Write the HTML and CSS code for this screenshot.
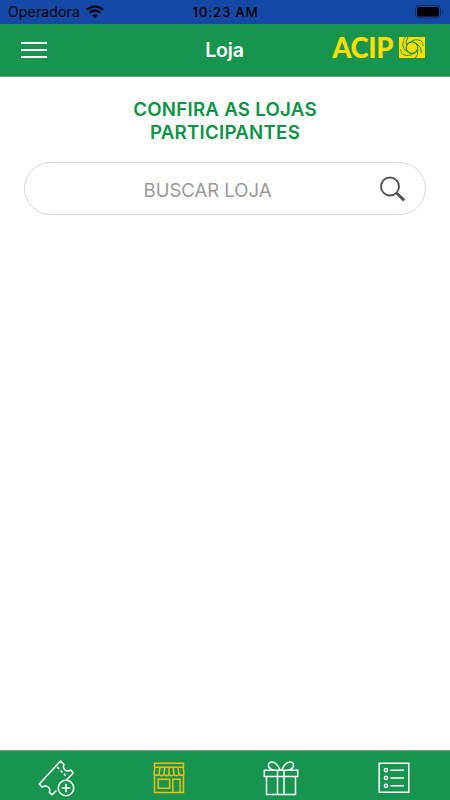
FILE: index.html
```html
<!DOCTYPE html>
<html lang="pt-BR">
<head>
    <meta charset="UTF-8">
    <meta name="viewport" content="width=device-width, initial-scale=1">
    <title>Loja</title>
    <link rel="stylesheet" href="styles.css">
</head>

<body>
    <div class="status">
        <div class="carrier">
            <span class="carrier-name">Operadora</span>
            <svg class="wifi" width="18" height="13" viewBox="0 0 18 13" fill="none" stroke="#000" stroke-width="2.3">
                <path d="M1 4.7Q9-2 17 4.7" />
                <path d="M3.8 7.7Q9 3.4 14.2 7.7" />
                <path d="M9 13L6.2 10.2Q9 8.2 11.8 10.2Z" fill="#000" stroke="none" />
            </svg>
        </div>
        <span class="time">10:23 AM</span>
        <svg class="battery" width="28" height="14" viewBox="0 0 28 14">
            <rect x=".5" y=".5" width="25" height="12.5" rx="3.5" fill="none" stroke="#0b2f6b" />
            <rect x="2" y="2" width="22" height="9.5" rx="2" />
            <path d="M27 4.5Q29 6.8 27 9Z" fill="#0b2f6b" />
        </svg>
    </div>

    <header class="header">
        <button class="menu" aria-label="Menu">
            <span></span>
            <span></span>
            <span></span>
        </button>
        <h1 class="title">Loja</h1>
        <div class="logo">
            <span class="logo-name">ACIP</span>
            <svg class="logo-mark" width="26" height="22" viewBox="0 0 26 22">
                <rect width="26" height="21" fill="#fedd00" />
                <g fill="none" stroke="#17954f">
                    <circle cx="13" cy="10.7" r="5.8" stroke-width="1.3" />
                    <path d="M7.6 9Q6 4 9 0M11.5 5Q16 1 22.5 4M17.8 7.2Q23 10 22 16M18.6 12.3Q19.5 18 16 21M14.5 16.3Q10 20 3.8 17.5M8.4 14.5Q3 12 4 5.5" />
                    <path d="M4 5.5Q4.5 2.5 6.5 0M22.5 4Q24 6 24.3 9M3.8 17.5Q1.5 15 1.5 12" stroke-width=".8" />
                </g>
            </svg>
        </div>
    </header>

    <main class="content">
        <h2 class="heading">CONFIRA AS LOJAS<br>PARTICIPANTES</h2>
        <form class="search">
            <input class="search-input" type="text" placeholder="BUSCAR LOJA">
            <svg class="search-icon" width="27" height="27" viewBox="0 0 27 27" fill="none" stroke="#555">
                <circle cx="11" cy="10.5" r="9" stroke-width="1.9" />
                <path d="M17.5 17L25.2 24.4" stroke-width="3" />
            </svg>
        </form>
    </main>

    <nav class="tabs">
        <a class="tab">
            <svg width="38" height="38" viewBox="0 0 38 38" fill="none" stroke="#fff" stroke-width="1.5" stroke-linejoin="round">
                <path d="M19.5 31.5L15 35.8L12.3 33.2Q13.7 29.8 11 27.8Q8 25.9 5 28.1L2.3 25L23.5 2L27 5.5Q25.5 8.8 28 11Q30.5 13 34 11L36.2 14L29.5 21" />
                <path d="M20.2 8L30 18" stroke-dasharray="2.8 2" />
                <circle cx="29" cy="29" r="7.7" />
                <path d="M29 24.7v8.6M24.7 29h8.6" />
            </svg>
        </a>
        <a class="tab tab-active">
            <svg width="32" height="32" viewBox="0 0 32 32" fill="none" stroke="#efbd13" stroke-width="1.5">
                <path d="M1.5 5.5V1.3H30.5V5.5M1.5 12V30.5H30.5V12" />
                <path d="M1.8 5.2H30.2L31 11.5Q29.5 14.5 26 12.5Q23.5 15 21 12.5Q18.5 15 16 12.5Q13.5 15 11 12.5Q8.5 15 6 12.5Q2.5 14.5 1 11.5Z" />
                <path d="M7 5.2L6 12.5M11.8 5.2L11 12.5M16 5.2V12.5M20.2 5.2L21 12.5M25 5.2L26 12.5" />
                <path d="M5.2 17.3H16.6V26.2H5.2ZM19.8 30V17.3H27V30" />
            </svg>
        </a>
        <a class="tab">
            <svg width="36" height="36" viewBox="0 0 36 36" fill="none" stroke="#fff" stroke-width="1.5">
                <path d="M1.3 10.3H34.7V16.5H1.3ZM3.5 16.5V34.5H32.5V16.5M14.5 10.3V34.5M21 10.3V34.5" />
                <path d="M17.2 10.3Q13.5 1.8 8.8 2.1Q5 2.5 5.6 6Q6.3 9.3 11 10.3M18.6 10.3Q22.5 1.8 27.2 2.1Q31 2.5 30.4 6Q29.7 9.3 25 10.3" />
            </svg>
        </a>
        <a class="tab">
            <svg width="32" height="32" viewBox="0 0 32 32" fill="none" stroke="#fff" stroke-width="1.5">
                <path d="M1.2 1.2H30.8V30.2H1.2Z" />
                <circle cx="8" cy="8.2" r="1.6" />
                <circle cx="8" cy="15.9" r="1.6" />
                <circle cx="8" cy="23.8" r="1.6" />
                <path d="M12.5 8.2H26M12.5 15.9H26M12.5 23.8H26" />
            </svg>
        </a>
    </nav>
</body>
</html>
```
FILE: styles.css
```css
* {
    box-sizing: border-box;
}
body {
    display: flex;
    flex-direction: column;
    height: 100vh;
    margin: 0;
    background: #fff;
    font-family: Inter, "Liberation Sans", sans-serif;
}
svg {
    display: block;
    flex: none;
}

/* status bar */
.status {
    display: grid;
    grid-template-columns: 1fr auto 1fr;
    align-items: center;
    height: 24px;
    padding: 0 7px 0 8px;
    background: #144aa5;
    color: #000;
    font-size: 14px;
}
.carrier {
    display: flex;
    align-items: center;
    gap: 6px;
    padding-bottom: 1px;
}
.carrier-name {
    letter-spacing: .15px;
}
.time {
    font-size: 13.5px;
    font-weight: 500;
    letter-spacing: .65px;
}
.battery {
    justify-self: end;
}

/* header */
.header {
    display: grid;
    grid-template-columns: 1fr auto 1fr;
    align-items: center;
    height: 53px;
    padding: 0 25px 0 21px;
    border-bottom: 1px solid #6fa184;
    background: #17954f;
}
.menu {
    display: flex;
    flex-direction: column;
    gap: 5px;
    width: 26px;
    padding: 0;
    border: 0;
    background: none;
}
.menu span {
    height: 2px;
    background: #fff;
}
.title {
    margin: 0;
    padding-left: 3px;
    color: #fff;
    font-size: 19.5px;
    font-weight: 600;
    letter-spacing: -.2px;
}
.logo {
    display: flex;
    align-items: center;
    justify-self: end;
    gap: 6px;
    padding-bottom: 4px;
}
.logo-name {
    color: #fedd00;
    font: 900 27.5px/22px Lato, sans-serif;
    letter-spacing: -.4px;
}

/* content */
.content {
    flex: 1;
    padding: 21px 24px 0;
}
.heading {
    margin: 0 0 18px;
    color: #0c9347;
    font-size: 18.7px;
    font-weight: 600;
    letter-spacing: .25px;
    line-height: 23px;
    text-align: center;
}
.search {
    display: flex;
    align-items: center;
    height: 53px;
    padding: 1px 19px 0 0;
    border: 1px solid #d6d6d6;
    border-radius: 27px;
}
.search-input {
    flex: 1;
    min-width: 0;
    padding: 1px 0 0 11px;
    border: 0;
    outline: 0;
    background: none;
    font: 18.5px Inter, "Liberation Sans", sans-serif;
    text-align: center;
}
.search-input::placeholder {
    color: #999;
}
.search-icon {
    margin-top: 1px;
}

/* bottom tabs */
.tabs {
    display: grid;
    grid-template-columns: repeat(4, 1fr);
    height: 50px;
    border-top: 1px solid #6fa184;
    background: #17954f;
}
.tab {
    display: flex;
    align-items: center;
    justify-content: center;
    padding-top: 4px;
}
```
